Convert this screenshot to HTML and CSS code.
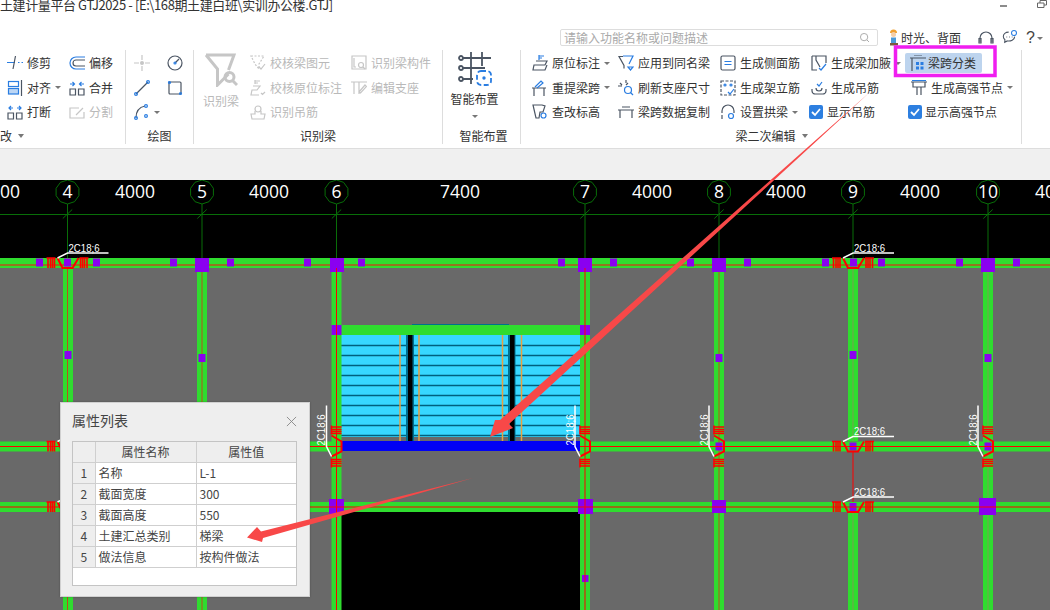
FILE: index.html
```html
<!DOCTYPE html>
<html lang="zh">
<head>
<meta charset="utf-8">
<title>GTJ2025</title>
<link rel="stylesheet" href="styles.css">
</head>
<body>
<div class="app">
  <header class="title">
    <span class="title-text">土建计量平台 GTJ2025 - [E:\168期土建白班\实训办公楼.GTJ]</span>
    <div class="winctl">
      <svg class="win-min" viewBox="0 0 7 2"><path d="M0 1h7"/></svg>
      <svg class="win-max" viewBox="0 0 10 8"><path d="M3 3V.5h6.500v4.500H7M.5 3h6.500v4.500H.5z"/></svg>
    </div>
  </header>

  <div class="tools">
    <div class="search">
      <span class="placeholder">请输入功能名称或问题描述</span>
      <svg class="i" viewBox="0 0 16 16"><circle cx="7.500" cy="7.500" r="4.500"/><path d="M11 11l2.500 2.500"/></svg>
    </div>
    <svg class="avatar" viewBox="0 0 11 18"><path class="hat" d="M2 5a3.500 3.500 0 0 1 7 0z"/><circle class="face" cx="5.500" cy="6.500" r="2.500"/><path class="shirt" d="M3 9.500h5V15H3z"/><path class="legs" d="M2 15h8v2.500H2z"/></svg>
    <span class="user">时光、背面</span>
    <svg class="i t-head" viewBox="0 0 16 16"><path d="M2 12V8a6 6 0 0 1 12 0v4"/><path d="M1 8.500h2v4.500H1zM13 8.500h2v4.500h-2z"/></svg>
    <svg class="i t-chat" viewBox="0 0 18 16"><path d="M7.500 2.500c-3.500 0-6 2-6 5 0 1.500.7 2.700 1.800 3.600L3 14l3-1.600c3.800.6 8-1 8.300-4.800"/><path d="M5 8h.8M8 8h.8M11 8h.8"/><circle class="b" cx="13.500" cy="3.500" r="2.800"/></svg>
    <span class="help">?</span><i class="ar help-ar"></i>
  </div>

  <nav class="ribbon">
    <section class="group g1">
      <div class="rows">
        <div class="it"><svg class="i" viewBox="0 0 16 16"><path class="b" d="M0 7.500h8M11 7.500h1.500M14.500 7.500h1.500"/><path d="M8.500 1L6 14"/></svg><span>修剪</span></div>
        <div class="it"><svg class="i" viewBox="0 0 16 16"><path class="b" d="M16 2H7a6 6 0 0 0 0 12h9"/><path d="M16 5H7a3 3 0 0 0 0 6h9"/></svg><span>偏移</span></div>
        <div class="it"><svg class="i" viewBox="0 0 16 16"><rect class="b" x="1.500" y="1.500" width="10" height="5"/><rect class="b lt" x="1.500" y="8.500" width="10" height="5.500"/><path d="M14.500 0v16"/></svg><span>对齐</span><i class="ar"></i></div>
        <div class="it"><svg class="i" viewBox="0 0 16 16"><path d="M1 9h5.500v6H1zM9.500 9H15v6H9.500z"/><path class="b" d="M1 4h4M3.500 2l2 2-2 2M15 4h-4M12.500 2l-2 2 2 2"/></svg><span>合并</span></div>
        <div class="it"><svg class="i" viewBox="0 0 16 16"><path d="M1 9h5.500v6H1zM9.500 9H15v6H9.500z"/><path class="b" d="M6 4H2M4 2L2 4l2 2M10 4h4M12 2l2 2-2 2"/></svg><span>打断</span></div>
        <div class="it off"><svg class="i" viewBox="0 0 16 16"><path d="M15 8v6H1V4h9M7 11l7-7"/></svg><span>分割</span></div>
      </div>
      <div class="label left"><span>改</span><i class="ar ar-lg"></i></div>
    </section>

    <section class="group g2">
      <div class="rows">
        <div class="it off"><svg class="i" viewBox="0 0 16 16"><path d="M0 8h5M11 8h5M8 0v5M8 11v5"/><circle class="dot" cx="8" cy="8" r="2"/></svg></div>
        <div class="it"><svg class="i" viewBox="0 0 16 16"><circle cx="8" cy="8" r="7"/><path d="M8 8l4-4"/><circle class="b" cx="8" cy="8" r="1"/></svg></div>
        <div class="it"><svg class="i" viewBox="0 0 16 16"><path d="M2 14L14 2"/><circle class="b" cx="2" cy="14" r="1.400"/><circle class="b" cx="14" cy="2" r="1.400"/></svg></div>
        <div class="it"><svg class="i" viewBox="0 0 16 16"><rect x="2" y="2" width="12" height="12" rx="1"/><circle class="b" cx="2.500" cy="2.500" r="1"/><circle class="b" cx="13.500" cy="13.500" r="1"/></svg></div>
        <div class="it"><svg class="i" viewBox="0 0 16 16"><path d="M2 14C2 7 6 3 11 2"/><circle class="b" cx="2" cy="14" r="1.400"/><circle class="b" cx="12" cy="2" r="1.400"/><circle class="b" cx="12" cy="12" r="1.400"/></svg><i class="ar"></i></div>
      </div>
      <div class="label"><span>绘图</span></div>
    </section>

    <section class="group g3">
      <div class="rows">
        <div class="big off">
          <svg class="big-ic" viewBox="0 0 34 34"><path d="M2 2h28l-5.500 15M2 2l11.500 14v16l11-11"/><circle cx="25.500" cy="24" r="4.500"/><path d="M29 28l4 4"/></svg>
          <span>识别梁</span>
        </div>
        <div class="it off"><svg class="i" viewBox="0 0 16 16"><path stroke-dasharray="2 1.500" d="M1 1h13L9 9v5L5 9z"/><path d="M9 12l2 2 4-5"/></svg><span>校核梁图元</span></div>
        <div class="it off"><svg class="i" viewBox="0 0 16 16"><path d="M1 1h14v13H1zM3 3v9h2"/><circle cx="10" cy="10" r="2.500"/><path d="M12 12l2 2"/></svg><span>识别梁构件</span></div>
        <div class="it off"><svg class="i" viewBox="0 0 16 16"><path d="M5 0v4M5 1h5M5 3h3M3 6h7L7 10H2l-1 5h8M11 13l1.500 1.500L15 12"/></svg><span>校核原位标注</span></div>
        <div class="it off"><svg class="i" viewBox="0 0 16 16"><path d="M0 2h16M3 2v12M8 2v12M8 12l6-7 1.500 1.500-6 6.500z"/></svg><span>编辑支座</span></div>
        <div class="it off"><svg class="i" viewBox="0 0 16 16"><circle cx="8" cy="5" r="3"/><path d="M5 7v3H1l1 5h12l1-5h-4V7"/></svg><span>识别吊筋</span></div>
      </div>
      <div class="label"><span>识别梁</span></div>
    </section>

    <section class="group g4">
      <div class="big">
        <svg class="big-ic" viewBox="0 0 34 34"><path class="thick" d="M5 6h28M5 16h22M5 27h10M13 0v32M24 0v14"/><circle class="thick" cx="3" cy="6" r="2"/><circle class="thick" cx="3" cy="16" r="2"/><circle class="thick" cx="3" cy="27" r="2"/><rect class="b thick" x="19" y="19" width="14" height="14" rx="4" stroke-dasharray="5 2.500"/><circle class="b thick" cx="26" cy="26" r=".8"/></svg>
        <span>智能布置</span>
        <i class="ar"></i>
      </div>
      <div class="label"><span>智能布置</span></div>
    </section>

    <section class="group g5">
      <div class="rows">
        <div class="it"><svg class="i" viewBox="0 0 16 16"><path class="b" d="M7 0v5M7 1h5M7 3h3"/><path d="M4 6h11l-2 4H2l-1 5h12l2-5"/></svg><span>原位标注</span><i class="ar"></i></div>
        <div class="it"><svg class="i" viewBox="0 0 16 16"><path d="M5 1.500H1l5 9v3"/><path class="b" d="M5 1h10l-4 8"/><path class="b" d="M10 12h5l-2.500 3z"/></svg><span>应用到同名梁</span></div>
        <div class="it"><svg class="i" viewBox="0 0 16 16"><rect x="1" y="1" width="14" height="14" rx="1.500"/><path class="b" d="M4.500 6.500h7M4.500 9.500h7"/></svg><span>生成侧面筋</span></div>
        <div class="it"><svg class="i" viewBox="0 0 16 16"><path d="M1 1h14v7M1 1v14h5M5 1v4l4 7"/><path class="b" d="M8 13l2 2 5-6"/></svg><span>生成梁加腋</span><i class="ar"></i></div>
        <div class="it active"><svg class="i" viewBox="0 0 16 16"><path d="M0 3h16M2 16V3M4 0h8"/><path class="bf" d="M6 7h3v3H6zM10.500 7h3v3h-3zM6 11.500h3v3H6zM10.500 11.500h3v3h-3z"/></svg><span>梁跨分类</span></div>

        <div class="it"><svg class="i" viewBox="0 0 16 16"><path d="M0 8h14M2 16v-8M12 16v-8"/><path class="b" d="M3 7l6-6 2 2-6 5"/></svg><span>重提梁跨</span><i class="ar"></i></div>
        <div class="it"><svg class="i" viewBox="0 0 16 16"><path d="M0 6h4M2 3l2 2M8 0v3M8 5l2-2"/><circle class="b" cx="10" cy="10" r="3.500"/><path class="b" d="M12.500 12.500L15 15"/></svg><span>刷新支座尺寸</span></div>
        <div class="it"><svg class="i" viewBox="0 0 16 16"><path stroke-dasharray="3 1.500" d="M1 1h14v14H1z"/><circle class="b" cx="5" cy="5" r="1"/><circle class="b" cx="11" cy="5" r="1"/><path class="b" d="M8 12l2 2 4-5"/></svg><span>生成架立筋</span></div>
        <div class="it"><svg class="i" viewBox="0 0 16 16"><path d="M1 9v2c0 2 2 3 3 3h8c1 0 3-1 3-3V9M5 8c0 3 3 3 3 3s3 0 3-3"/><path class="b" d="M6 4l2 2 3-4"/></svg><span>生成吊筋</span></div>
        <div class="it it-wide"><svg class="i" viewBox="0 0 16 16"><path d="M0 2h16M2 2v5h12V2M6 7v8M10 7v8"/><path class="b" d="M1 .500h14"/></svg><span>生成高强节点</span><i class="ar"></i></div>

        <div class="it"><svg class="i" viewBox="0 0 16 16"><path d="M1 1h9l3 1-2 6H8l-1 6H4z"/><circle class="b" cx="11.500" cy="11.500" r="2.500"/></svg><span>查改标高</span></div>
        <div class="it"><svg class="i" viewBox="0 0 16 16"><path d="M0 6h16M2 14V6M14 14V6M4 3h8"/></svg><span>梁跨数据复制</span></div>
        <div class="it"><svg class="i" viewBox="0 0 16 16"><path d="M2 9V7a6 6 0 0 1 12 0v2M2 11v4"/><circle class="b" cx="11" cy="12" r="2.500"/></svg><span>设置拱梁</span><i class="ar"></i></div>
        <label class="it chk"><svg class="cb" viewBox="0 0 14 14"><rect width="14" height="14" rx="2"/><path d="M3 7l3 3 5-6"/></svg><span>显示吊筋</span></label>
        <label class="it chk chk-wide"><svg class="cb" viewBox="0 0 14 14"><rect width="14" height="14" rx="2"/><path d="M3 7l3 3 5-6"/></svg><span>显示高强节点</span></label>
      </div>
      <div class="label"><span>梁二次编辑</span><i class="ar ar-lg"></i></div>
    </section>
  </nav>

  <div class="strip"></div>

  <main class="cad">
    <svg class="cad-svg" viewBox="0 180 1050 430" width="1050" height="430">
      <defs>
        <g id="rb">
          <path class="rb-l" d="M-21-5h9M-19.500-5v10M-17-5v10M-15-5v10M-13-5v10M12-5h9M13-5v10M15-5v10M17-5v10M19.500-5v10"/>
          <path class="rb-t" d="M-10-5l5 10H5l6-10"/>
          <path class="lead" d="M-10-5L0-10h41"/>
          <text class="note" x="1" y="-11.500" textLength="31" lengthAdjust="spacingAndGlyphs">2C18;6</text>
        </g>
        <g id="ax">
          <path class="axis" d="M0 12V78M-4.700 26.500l9.400-9"/>
          <polygon class="bubble" points="0,-12 7,-9.700 11.400,-3.700 11.400,3.700 7,9.700 0,12 -7,9.700 -11.400,3.700 -11.400,-3.700 -7,-9.700"/>
        </g>
      </defs>

      <rect class="c-gray" x="0" y="268" width="1050" height="342"/>
      <rect class="c-black" x="0" y="180" width="1050" height="78"/>
      <rect class="c-black" x="341" y="512" width="239" height="98"/>

      <path class="axis" d="M0 214.500H1050"/>
      <use href="#ax" x="67.500" y="192"/><use href="#ax" x="202" y="192"/><use href="#ax" x="336.500" y="192"/><use href="#ax" x="585" y="192"/><use href="#ax" x="719" y="192"/><use href="#ax" x="853" y="192"/><use href="#ax" x="988" y="192"/>

      <text class="dim" x="10" y="198" text-anchor="middle">00</text>
      <text class="dim" x="135" y="198" text-anchor="middle">4000</text>
      <text class="dim" x="269" y="198" text-anchor="middle">4000</text>
      <text class="dim" x="460" y="198" text-anchor="middle">7400</text>
      <text class="dim" x="652" y="198" text-anchor="middle">4000</text>
      <text class="dim" x="786" y="198" text-anchor="middle">4000</text>
      <text class="dim" x="920" y="198" text-anchor="middle">4000</text>
      <text class="dim" x="1035" y="198">40</text>
      <text class="dim" x="67.500" y="198" text-anchor="middle">4</text>
      <text class="dim" x="202" y="198" text-anchor="middle">5</text>
      <text class="dim" x="336.500" y="198" text-anchor="middle">6</text>
      <text class="dim" x="585" y="198" text-anchor="middle">7</text>
      <text class="dim" x="719" y="198" text-anchor="middle">8</text>
      <text class="dim" x="853" y="198" text-anchor="middle">9</text>
      <text class="dim" x="988" y="198" text-anchor="middle">10</text>

      <!-- room -->
      <path class="c-teal" d="M412 324.500h97"/>
      <rect class="c-cyan" x="341" y="335" width="239" height="102"/>
      <path class="c-rib" d="M341 345.500h239M341 355.500h239M341 365.500h239M341 375.500h239M341 385.500h239M341 395.500h239M341 405.500h239M341 415.500h239M341 425.500h239M341 435.500h239"/>
      <path class="c-slot" d="M406 335h8v106h-8zM508 335h7.500v106H508z"/>
      <path class="c-slot-in" d="M408 335h4.500v106H408zM510 335h4.500v106H510z"/>
      <path class="c-orange" d="M400 441V331h19v110M502.500 441V331h19v110"/>

      <!-- beams -->
      <path class="beam" d="M0 263h1050M0 446.500h341M580 446.500h470M0 507h1050M68 268V610M202 268V610M336.500 268V610M585 268V610M719 268V610M853 268V441M853 512V610M988 268V610M341 330h239"/>
      <path class="blue" d="M341 446h239"/>
      <path class="line-b" d="M0 265h1050"/>
      <path class="line-v" d="M67.500 268V610M202 268V610M719 268V610"/>
      <path class="line-f" d="M853 268V441M853 512V610M988 268V610"/>
      <path class="purple" d="M36 258.500h7v8h-7zM64 258.500h7v8h-7zM93 258.500h7v8h-7zM170 258.500h7v8h-7zM227 258.500h7v8h-7zM304 258.500h7v8h-7zM358 258.500h7v8h-7zM558 258.500h7v8h-7zM610 258.500h7v8h-7zM687 258.500h7v8h-7zM744 258.500h7v8h-7zM822 258.500h7v8h-7zM850 258.500h7v8h-7zM878 258.500h7v8h-7zM956 258.500h7v8h-7zM1013 258.500h7v8h-7zM195 258h14v14h-14zM330 258h14v14h-14zM578 258h14v14h-14zM712 258h14v14h-14zM981 258h14v14h-14zM331.500 325h10v10h-10zM580 325h10v10h-10zM64.500 351h7v8h-7zM198.500 354h7v8h-7zM715.500 354h7v8h-7zM849.500 351h7v8h-7zM984.500 354h7v8h-7zM715.500 442.500h7v8h-7zM849.500 442.500h7v8h-7zM984.500 442.500h7v8h-7zM329 499h15v15h-15zM578 499h15v15h-15zM712 500h14v13h-14zM849.500 503h7v8h-7zM979 498h17v17h-17zM582 575h6.500v7H582z"/>
      <path class="line-r" d="M0 446.500h341M580 446.500h470M0 507h1050M336.500 268V610M585 268V610M853 451V502"/>

      <use href="#rb" transform="translate(67.500 263)"/>
      <use href="#rb" transform="translate(853 263)"/>
      <use href="#rb" transform="translate(67.500 446.500)"/>
      <use href="#rb" transform="translate(853 446.500)"/>
      <use href="#rb" transform="translate(67.500 507)"/>
      <use href="#rb" transform="translate(853 507)"/>
      <use href="#rb" transform="translate(336.500 446.500) rotate(-90)"/>
      <use href="#rb" transform="translate(585 446.500) rotate(-90)"/>
      <use href="#rb" transform="translate(719 446.500) rotate(-90)"/>
      <use href="#rb" transform="translate(988 446.500) rotate(-90)"/>
    </svg>
  </main>

  <aside class="dialog">
    <div class="dlg-head">
      <span class="dlg-title">属性列表</span>
      <svg class="dlg-x" viewBox="0 0 12 12"><path d="M1 1l10 10M11 1L1 11"/></svg>
    </div>
    <div class="dlg-body">
      <table class="props">
        <thead><tr><th class="idx"></th><th class="name">属性名称</th><th class="val">属性值</th></tr></thead>
        <tbody>
          <tr><th class="idx">1</th><td>名称</td><td>L-1</td></tr>
          <tr><th class="idx">2</th><td>截面宽度</td><td>300</td></tr>
          <tr><th class="idx">3</th><td>截面高度</td><td>550</td></tr>
          <tr><th class="idx">4</th><td>土建汇总类别</td><td>梯梁</td></tr>
          <tr><th class="idx">5</th><td>做法信息</td><td>按构件做法</td></tr>
        </tbody>
      </table>
    </div>
  </aside>

  <svg class="marks" viewBox="0 0 1050 610" width="1050" height="610">
    <polygon class="arrow" points="490,437 495,420 500,420 870,92 509,424 513,428"/>
    <polygon class="arrow" points="247,537.500 257,527 261,531.500 473,478 263,538 262,542"/>
    <rect class="pink" x="895.500" y="47" width="99.500" height="28.500"/>
  </svg>
</div>
</body>
</html>
```

FILE: styles.css
```css
* { box-sizing: border-box; }
html, body { margin: 0; padding: 0; }
body {
  width: 1050px;
  height: 610px;
  overflow: hidden;
  background: #fff;
  font-family: "Noto Sans CJK SC", "Liberation Sans", sans-serif;
  font-size: 12px;
  color: #333;
}
.app { position: relative; width: 1050px; height: 610px; display: flex; flex-direction: column; overflow: hidden; }

/* title */
.title { flex: 0 0 14px; display: flex; justify-content: space-between; }
.title-text { font-size: 13px; line-height: 10px; letter-spacing: -.4px; white-space: nowrap; color: #333; }
.winctl { display: flex; align-items: flex-start; gap: 30px; padding-right: 3px; }
.win-min { width: 7px; height: 2px; margin-top: 5px; fill: none; stroke: #666; stroke-width: 1.500; }
.win-max { width: 10px; height: 8px; fill: none; stroke: #666; }

/* search row */
.tools { flex: 0 0 33px; display: flex; align-items: flex-start; padding: 15px 0 0 560px; }
.search { width: 318px; height: 17px; border: 1px solid #ddd; border-radius: 2px; display: flex; align-items: center; justify-content: space-between; padding: 0 6px 0 3px; flex: none; }
.placeholder { color: #aaa; line-height: 15px; }
.search .i { width: 13px; height: 13px; stroke: #aaa; }
.avatar { width: 11px; height: 18px; margin: -1px 2px 0 10px; flex: none; }
.hat { fill: #f0a030; }
.face { fill: #f6cfa8; }
.shirt { fill: #4c9ad8; }
.legs { fill: #7a5a40; }
.user { line-height: 18px; color: #333; width: 60px; flex: none; }
.t-head { margin: 1px 0 0 17px; }
.t-chat { width: 18px; height: 16px; margin: 0 0 0 8px; }
.help { font-size: 16px; line-height: 17px; margin-left: 8px; color: #444; font-family: "Liberation Sans", sans-serif; }
.help-ar { margin: 8px 0 0 2px; }

/* ribbon */
.ribbon { flex: 0 0 102px; display: flex; border-bottom: 1px solid #ddd; background: #fff; padding-top: 3px; }
.group { display: flex; flex-direction: column; flex: none; height: 94px; border-right: 1px solid #ddd; }
.rows { display: grid; grid-auto-rows: 24.500px; padding-top: 1px; height: 75px; }
.label { display: flex; align-items: center; justify-content: center; gap: 6px; height: 19px; line-height: 16px; padding-top: 3px; }
.label.left { justify-content: flex-start; }
.it { display: flex; align-items: center; white-space: nowrap; gap: 4px; line-height: 16px; }
.off { color: #b9b9b9; }
.i { width: 16px; height: 16px; flex: none; fill: none; stroke: #4b5563; stroke-width: 1.200; }
.off .i, .off .big-ic { stroke: #c6c6c6; }
.i .b, .big-ic .b { stroke: #2a7de1; }
.i .lt { fill: #bcd6f5; }
.i .bf { fill: #2a7de1; stroke: none; }
.i .dot { fill: #c6c6c6; stroke: none; }
.ar { display: inline-block; flex: none; width: 0; height: 0; border-left: 3px solid transparent; border-right: 3px solid transparent; border-top: 3.500px solid #777; }
.ar-lg { border-left-width: 3.500px; border-right-width: 3.500px; border-top-width: 4px; }

.g1 { width: 126px; }
.g1 .rows { grid-template-columns: 62px 1fr; padding-left: 7px; }
.g2 { width: 68px; }
.g2 .rows { grid-template-columns: 33px 1fr; padding-left: 8px; }
.g3 { width: 249px; }
.g3 .rows { grid-template-columns: 46px 101px 1fr; padding-left: 10px; }
.g3 .big { grid-row: span 3; }
.g4 { width: 78px; }
.g4 .label { padding-left: 4px; }
.g5 { width: 501px; padding-left: 11px; }
.g5 .rows { grid-template-columns: 86px 102px 91px 88px 1fr; }
.g5 .label { padding-right: 10px; }

.big { display: flex; flex-direction: column; align-items: center; line-height: 16px; white-space: nowrap; }
.big-ic { width: 34px; height: 34px; fill: none; stroke: #c6c6c6; stroke-width: 3; margin-top: 2px; margin-bottom: 6px; }
.g3 .big { align-items: flex-start; }
.g3 .big span { margin-left: -1px; }
.g4 .big { height: 75px; padding-right: 14px; }
.g4 .big-ic { stroke: #4b5563; margin: 2px 0 5px; }
.g4 .big span { margin-bottom: 8px; }
.big-ic .thick { stroke-width: 1.800; }

.active { background: #bdd4ee; border-radius: 2px; width: 77px; height: 20px; margin: 2px 0 0 6px; padding-left: 5px; gap: 2px; align-self: start; }
.it-wide { padding-left: 12px; }
.chk { margin-left: -2px; }
.chk-wide { margin-left: 9px; gap: 3px; }
.cb { width: 14px; height: 14px; flex: none; }
.cb rect { fill: #2d7fe0; }
.cb path { fill: none; stroke: #fff; stroke-width: 1.800; }

.strip { flex: 0 0 31px; background: #f0f0f0; }

/* cad */
.cad { flex: 0 0 430px; background: #000; overflow: hidden; }
.cad-svg { display: block; }
.c-gray { fill: #696969; }
.c-black { fill: #000; }
.c-cyan { fill: #37d7ff; }
.c-teal { stroke: #00708c; stroke-width: 1; fill: none; }
.c-rib { stroke: #00607e; stroke-width: 1.500; fill: none; }
.c-slot { fill: #007090; }
.c-slot-in { fill: #000; }
.c-orange { fill: none; stroke: #e8a040; stroke-width: 1.500; }
.beam { stroke: #2fdc2f; stroke-width: 10; fill: none; }
.blue { stroke: #0000f5; stroke-width: 10; fill: none; }
.line-b { stroke: #b8501c; stroke-width: 1.500; fill: none; }
.line-v { stroke: #b8501c; stroke-width: 1; fill: none; }
.line-f { stroke: #7aa050; stroke-width: 1; fill: none; }
.line-r { stroke: #f00; stroke-width: 1; fill: none; }
.purple { fill: #8a00f0; }
.axis { stroke: #086e08; stroke-width: 1; fill: none; }
.bubble { fill: none; stroke: #086e08; stroke-width: 1; }
.dim { fill: #fff; font-family: "Open Sans", sans-serif; font-size: 17.500px; }
.rb-l { stroke: #f00; stroke-width: 1.600; fill: none; }
.rb-t { stroke: #f00; stroke-width: 2; fill: none; }
.lead { stroke: #fff; stroke-width: 1.500; fill: none; }
.note { fill: #fff; font-family: "Liberation Sans", sans-serif; font-size: 10.500px; }

/* dialog */
.dialog { position: absolute; left: 60px; top: 402px; width: 250px; height: 195px; background: #eeeeee; border: 1px solid #d0d0d0; box-shadow: 0 0 2px rgba(0,0,0,.25); }
.dlg-head { display: flex; align-items: center; justify-content: space-between; height: 37px; padding: 0 12px 0 11px; font-size: 14px; color: #444; }
.dlg-title { margin-top: -3px; }
.dlg-x { width: 11px; height: 11px; fill: none; stroke: #888; stroke-width: 1; }
.dlg-body { margin: 1px 12px 0 11px; height: 145px; background: #fff; border: 1px solid #c4c4c4; }
.props { width: 100%; border-collapse: collapse; table-layout: fixed; font-size: 12px; color: #444; }
.props th, .props td { height: 21px; padding: 0 3px; border: 1px solid #cfcfcf; font-weight: 400; line-height: 15px; text-align: left; }
.props tr > :first-child { border-left: 0; }
.props tr > :last-child { border-right: 0; }
.props thead tr > * { border-top: 0; background: #eeeeee; text-align: center; height: 20px; }
.props .idx { width: 22px; background: #eeeeee; text-align: center; padding: 0; }
.props .name { width: 101px; }

/* annotations */
.marks { position: absolute; left: 0; top: 0; pointer-events: none; }
.arrow { fill: #f84848; }
.pink { fill: none; stroke: #f01ef0; stroke-width: 3.500; }
```
